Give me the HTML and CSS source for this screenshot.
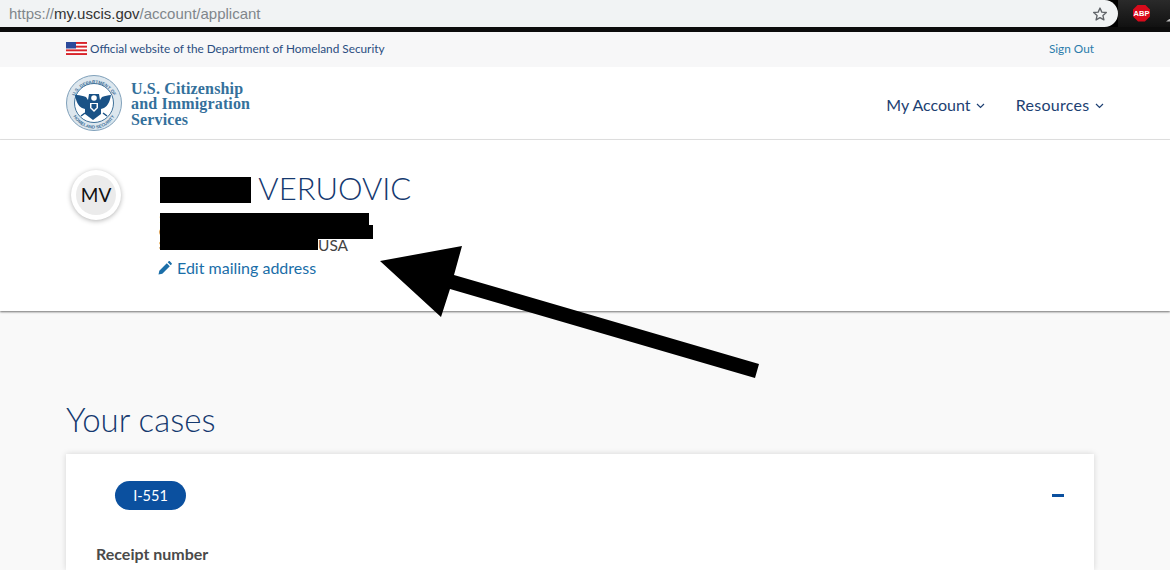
FILE: index.html
```html
<!DOCTYPE html>
<html lang="en">
<head>
    <meta charset="UTF-8">
    <title>USCIS Account</title>
    <link rel="stylesheet" href="styles.css">
</head>
<body>
    <div class="browser-bar">
        <div class="url-pill">
            <div class="url"><span class="url-dim">https://</span>my.uscis.gov<span class="url-dim">/account/applicant</span></div>
            <svg class="star" width="16" height="16" viewBox="0 0 24 24"><path d="M12 3l2.700 6.200 6.800.6-5.100 4.500 1.500 6.600L12 17.400l-5.900 3.500 1.500-6.600-5.100-4.500 6.800-.6z" fill="none" stroke="#5f6368" stroke-width="2" stroke-linejoin="round"/></svg>
        </div>
        <div class="ext-area">
            <div class="abp">ABP</div>
            <div class="ext-mark"></div>
        </div>
    </div>

    <div class="official-bar">
        <div class="official-left">
            <svg class="flag" width="21" height="13" viewBox="0 0 21 13">
                <rect width="21" height="13" fill="#fff"/>
                <rect width="21" height="1.900" fill="#d8232a"/>
                <rect y="3.700" width="21" height="1.900" fill="#d8232a"/>
                <rect y="7.400" width="21" height="1.900" fill="#d8232a"/>
                <rect y="11.100" width="21" height="1.900" fill="#d8232a"/>
                <rect width="10" height="6.500" fill="#2b4a9b"/>
            </svg>
            <span>Official website of the Department of Homeland Security</span>
        </div>
        <a class="sign-out" href="#">Sign Out</a>
    </div>

    <header class="site-header">
        <div class="logo">
            <svg class="seal" width="56" height="56" viewBox="0 0 56 56">
                <circle cx="28" cy="28" r="27.500" fill="#dde7ee" stroke="#7fa0ba"/>
                <circle cx="28" cy="28" r="19.500" fill="#fff" stroke="#3f7199" stroke-width="1"/>
                <path id="sealTop" d="M6.500 30a21.500 21.500 0 0 1 43 0" fill="none"/>
                <path id="sealBottom" d="M4.500 30a23.500 23.500 0 0 0 47 0" fill="none"/>
                <text class="seal-text"><textPath href="#sealTop" startOffset="50%" text-anchor="middle">U.S. DEPARTMENT OF</textPath></text>
                <text class="seal-text"><textPath href="#sealBottom" startOffset="50%" text-anchor="middle">HOMELAND SECURITY</textPath></text>
                <path d="M11 20c3 .5 6 .5 9 2l2 3 1-6h10l1 6 2-3c3-1.500 6-1.500 9-2-1 6-3 11-7 13l-3 1v5l-8 6-8-6v-5l-3-1c-4-2-6-7-7-13z" fill="#1a5286"/>
                <circle cx="28" cy="23" r="2.800" fill="#fff"/>
                <path d="M24 28h8v5l-4 4-4-4z" fill="#fff"/>
                <path d="M25.500 29h5v3.500l-2.500 2.500-2.500-2.500z" fill="#1a5286"/>
                <path d="M19 38l-4 3M37 38l4 3" stroke="#1a5286" stroke-width="1.500"/>
            </svg>
            <div class="logo-text">U.S. Citizenship<br>and Immigration<br>Services</div>
        </div>
        <nav class="main-nav">
            <a href="#">My Account
                <svg width="9" height="6" viewBox="0 0 9 6"><path d="M1 1l3.500 3.500L8 1" fill="none" stroke="#1d3f72" stroke-width="1.200"/></svg>
            </a>
            <a class="nav-resources" href="#">Resources
                <svg width="9" height="6" viewBox="0 0 9 6"><path d="M1 1l3.500 3.500L8 1" fill="none" stroke="#1d3f72" stroke-width="1.200"/></svg>
            </a>
        </nav>
    </header>

    <section class="profile">
        <div class="avatar"><div class="avatar-inner">MV</div></div>
        <div class="profile-info">
            <h2 class="profile-name"><span class="redact-name"></span> VERUOVIC</h2>
            <div class="address">
                <div class="address-hidden">1</div>
                <div class="address-hidden">C</div>
                <div class="address-last">S<span class="usa">USA</span></div>
                <span class="redact redact-1"></span>
                <span class="redact redact-2"></span>
                <span class="redact redact-3"></span>
            </div>
            <a class="edit-link" href="#">
                <svg width="14" height="14" viewBox="0 0 14 14"><path d="M0.500 13.500l.8-3.800 7.500-7.500 3 3-7.500 7.500zM9.700 1.300l1-1c.4-.3.800-.3 1.100 0l1.900 1.900c.3.300.3.700 0 1.100l-1 1z" fill="#1a6ea8"/></svg>
                Edit mailing address
            </a>
        </div>
    </section>

    <main class="cases">
        <h1 class="cases-title">Your cases</h1>
        <div class="case-card">
            <div class="case-top">
                <span class="case-pill">I-551</span>
                <span class="collapse-bar"></span>
            </div>
            <div class="receipt-label">Receipt number</div>
        </div>
    </main>

    <svg class="arrow" width="1170" height="570" viewBox="0 0 1170 570">
        <polygon points="380,261 462,246 454,275 759,364 755,378 450,289 441,317" fill="#000"/>
    </svg>
</body>
</html>
```

FILE: styles.css
```css
html, body {
    margin: 0;
    padding: 0;
    height: 570px;
    overflow: hidden;
}
body {
    position: relative;
    font-family: Lato, "Open Sans", sans-serif;
    background-color: #f9f9f9;
    color: #333;
}
a {
    text-decoration: none;
}
.browser-bar {
    display: flex;
    height: 27px;
    background-color: #000;
    border-bottom: 5px solid #0c0c0c;
}
.url-pill {
    flex: 0 0 1118px;
    box-sizing: border-box;
    height: 27px;
    padding: 0 10px 0 9px;
    display: flex;
    align-items: center;
    justify-content: space-between;
    background-color: #f1f3f4;
    border-radius: 0 14px 14px 0;
}
.url {
    font-family: "Liberation Sans", sans-serif;
    font-size: 15px;
    color: #333;
}
.url-dim {
    color: #80868b;
}
.ext-area {
    flex: 1;
    display: flex;
    align-items: center;
    justify-content: space-between;
    padding-left: 15px;
    background: linear-gradient(#2a2a2a, #111);
}
.abp {
    width: 17px;
    height: 17px;
    line-height: 17px;
    margin-top: -1px;
    clip-path: polygon(30% 0, 70% 0, 100% 30%, 100% 70%, 70% 100%, 30% 100%, 0 70%, 0 30%);
    background-color: #d80a1b;
    color: #fff;
    font-family: "Liberation Sans", sans-serif;
    font-size: 7.500px;
    font-weight: bold;
    text-align: center;
}
.ext-mark {
    width: 4px;
    height: 3px;
    margin: 13px 0 0;
    clip-path: polygon(100% 0, 100% 100%, 0 100%);
    background-color: #bbb;
}
.official-bar {
    height: 35px;
    box-sizing: border-box;
    padding: 0 76px 2px 66px;
    display: flex;
    align-items: center;
    justify-content: space-between;
    background-color: #f7f7f8;
    font-size: 11.800px;
}
.official-left {
    display: flex;
    align-items: center;
    gap: 3px;
    color: #2a4d80;
}
.sign-out {
    color: #2b7cab;
}
.site-header {
    height: 73px;
    box-sizing: border-box;
    padding: 0 66px;
    display: flex;
    align-items: center;
    justify-content: space-between;
    background-color: #fff;
    border-bottom: 1px solid #e6e6e6;
}
.logo {
    display: flex;
    align-items: center;
    gap: 9px;
}
.seal-text {
    font-family: "Liberation Sans", sans-serif;
    font-size: 4.500px;
    font-weight: bold;
    fill: #3f7199;
}
.logo-text {
    padding-top: 2px;
    font-family: "Liberation Serif", serif;
    font-size: 16px;
    line-height: 15.500px;
    font-weight: bold;
    letter-spacing: 0.15px;
    color: #34709b;
}
.main-nav {
    display: flex;
    gap: 31px;
    padding: 2px 0 0;
}
.main-nav a {
    font-size: 16px;
    color: #1d3f72;
}
.main-nav .nav-resources {
    letter-spacing: 0.3px;
}
.main-nav svg {
    margin-left: 1px;
    vertical-align: 2px;
}
.profile {
    height: 171px;
    box-sizing: border-box;
    padding: 30px 0 0 71px;
    display: flex;
    background-color: #fff;
    box-shadow: 0 1px 2px rgba(0, 0, 0, 0.55);
}
.avatar {
    width: 50px;
    height: 50px;
    box-sizing: border-box;
    padding: 5px;
    border-radius: 50%;
    background-color: #fff;
    box-shadow: 0 1px 5px rgba(0, 0, 0, 0.3);
}
.avatar-inner {
    width: 40px;
    height: 40px;
    line-height: 40px;
    border-radius: 50%;
    background-color: #ebebeb;
    color: #111;
    font-size: 19px;
    text-align: center;
}
.profile-info {
    margin-left: 38px;
}
.profile-name {
    margin: 2px 0 0;
    height: 32px;
    line-height: 32px;
    font-size: 31px;
    font-weight: 300;
    color: #15396f;
}
.redact-name {
    display: inline-block;
    width: 91px;
    height: 26px;
    margin-left: 1px;
    vertical-align: -3px;
    background-color: #000;
}
.address {
    position: relative;
    width: 230px;
    margin-top: 9px;
    line-height: 13px;
    color: #444;
}
.address-hidden {
    height: 13px;
    font-size: 10.500px;
}
.address-last {
    position: relative;
    height: 13px;
    font-size: 10.500px;
}
.usa {
    position: absolute;
    left: 159px;
    top: 0;
    font-size: 15.500px;
}
.redact {
    position: absolute;
    left: 1px;
    background-color: #000;
}
.redact-1 {
    top: 0;
    width: 209px;
    height: 14px;
}
.redact-2 {
    top: 12px;
    width: 213px;
    height: 14px;
}
.redact-3 {
    top: 25px;
    width: 158px;
    height: 12px;
}
.edit-link {
    display: flex;
    align-items: center;
    gap: 5px;
    margin-top: 6px;
    margin-left: -1px;
    font-size: 16px;
    color: #1a6ea8;
}
.cases {
    padding: 0 76px 0 66px;
}
.cases-title {
    margin: 89px 0 0;
    height: 54px;
    line-height: 38px;
    font-size: 33px;
    font-weight: 300;
    color: #15396f;
}
.case-card {
    height: 116px;
    box-sizing: border-box;
    padding: 27px 30px 0;
    background-color: #fff;
    box-shadow: 0 0 6px rgba(0, 0, 0, 0.15);
}
.case-top {
    display: flex;
    align-items: center;
    justify-content: space-between;
    padding-left: 19px;
}
.case-pill {
    width: 71px;
    height: 29px;
    line-height: 29px;
    border-radius: 15px;
    background-color: #0b509f;
    color: #fff;
    font-size: 14.500px;
    text-align: center;
}
.collapse-bar {
    width: 12px;
    height: 3px;
    margin-bottom: 1px;
    background-color: #0b509f;
}
.receipt-label {
    margin-top: 34px;
    font-size: 16px;
    font-weight: 700;
    color: #4a4a4a;
}
.arrow {
    position: absolute;
    left: 0;
    top: 0;
    pointer-events: none;
}
```
